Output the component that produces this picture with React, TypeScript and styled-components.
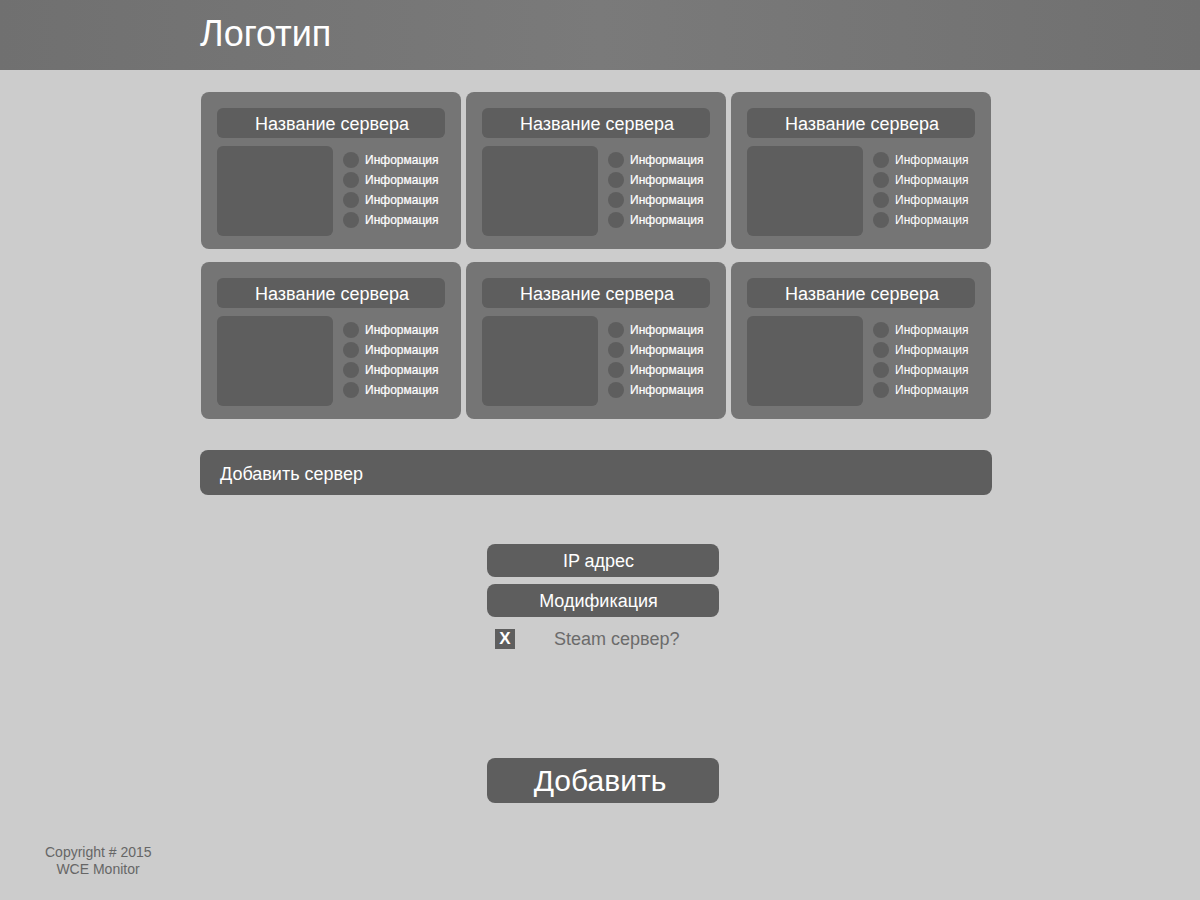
import { createGlobalStyle } from "styled-components";
import styled from "styled-components";

const GlobalStyle = createGlobalStyle`
  html, body {
    margin: 0;
    padding: 0;
    background: #cccccc;
    font-family: "Liberation Sans", Arial, sans-serif;
  }
`;

const servers = [1, 2, 3, 4, 5, 6];

const App = () => {
  return (
    <>
      <GlobalStyle />
      <Header>
        <HeaderInner>
          <Logo>Логотип</Logo>
        </HeaderInner>
      </Header>
      <Main>
        <Grid>
          {servers.map((id, i) => (
            <Card key={id}>
              <CardTitle>Название сервера</CardTitle>
              <CardBody>
                <Preview />
                <InfoList>
                  {[0, 1, 2, 3].map((n) => (
                    <InfoRow key={n} $strong={i % 3 !== 2}>
                      <Dot />
                      Информация
                    </InfoRow>
                  ))}
                </InfoList>
              </CardBody>
            </Card>
          ))}
        </Grid>

        <AddBar>Добавить сервер</AddBar>

        <Form>
          <Field>IP адрес</Field>
          <Field>Модификация</Field>
          <CheckRow>
            <CheckBox>X</CheckBox>
            <CheckLabel>Steam сервер?</CheckLabel>
          </CheckRow>
          <SubmitButton>Добавить</SubmitButton>
        </Form>
      </Main>
      <Footer>
        <div>Copyright # 2015</div>
        <div>WCE Monitor</div>
      </Footer>
    </>
  );
};

export default App;

const Header = styled.header`
  height: 70px;
  background: linear-gradient(90deg, #707070 0%, #7a7a7a 50%, #707070 100%);
`;

const HeaderInner = styled.div`
  width: 800px;
  margin: 0 auto;
  height: 100%;
  display: flex;
  align-items: center;
`;

const Logo = styled.div`
  color: #ffffff;
  font-size: 36px;
  line-height: 1;
  margin-top: -3px;
`;

const Main = styled.main`
  width: 792px;
  margin: 0 auto;
  padding: 22px 8px 0 0;
`;

const Grid = styled.div`
  display: grid;
  grid-template-columns: repeat(3, 260px);
  column-gap: 5px;
  row-gap: 13px;
  padding-left: 1px;
`;

const Card = styled.div`
  background: #757575;
  border-radius: 8px;
  padding: 16px 16px 13px;
  height: 157px;
  box-sizing: border-box;
`;

const CardTitle = styled.div`
  height: 30px;
  box-sizing: border-box;
  padding: 2px 0 0 2px;
  background: #5e5e5e;
  border-radius: 6px;
  color: #ffffff;
  font-size: 18px;
  display: flex;
  align-items: center;
  justify-content: center;
`;

const CardBody = styled.div`
  display: flex;
  margin-top: 8px;
  gap: 10px;
`;

const Preview = styled.div`
  width: 116px;
  height: 90px;
  background: #5e5e5e;
  border-radius: 6px;
`;

const InfoList = styled.div`
  display: flex;
  flex-direction: column;
  gap: 4px;
  padding-top: 6px;
`;

const InfoRow = styled.div<{ $strong: boolean }>`
  display: flex;
  align-items: center;
  gap: 6px;
  height: 16px;
  box-sizing: border-box;
  color: #ffffff;
  font-size: 12px;
  -webkit-text-stroke: ${(p) => (p.$strong ? "0.2px #ffffff" : "0")};
`;

const Dot = styled.span`
  width: 16px;
  height: 16px;
  border-radius: 50%;
  background: #5e5e5e;
  flex-shrink: 0;
`;

const AddBar = styled.div`
  margin-top: 31px;
  height: 45px;
  box-sizing: border-box;
  padding: 3px 0 0 20px;
  background: #5e5e5e;
  border-radius: 8px;
  color: #ffffff;
  font-size: 18px;
  display: flex;
  align-items: center;
`;

const Form = styled.div`
  width: 232px;
  margin-left: 287px;
  margin-top: 49px;
  display: flex;
  flex-direction: column;
  gap: 7px;
`;

const Field = styled.div`
  height: 33px;
  box-sizing: border-box;
  padding: 2px 9px 0 0;
  background: #5e5e5e;
  border-radius: 8px;
  color: #ffffff;
  font-size: 18px;
  display: flex;
  align-items: center;
  justify-content: center;
`;

const CheckRow = styled.div`
  display: flex;
  align-items: center;
  height: 20px;
  margin-top: 5px;
  padding-left: 8px;
`;

const CheckBox = styled.span`
  width: 20px;
  height: 20px;
  background: #5e5e5e;
  color: #ffffff;
  font-weight: bold;
  font-size: 17px;
  display: flex;
  align-items: center;
  justify-content: center;
`;

const CheckLabel = styled.span`
  margin-left: 39px;
  color: #6b6b6b;
  font-size: 18px;
`;

const SubmitButton = styled.div`
  margin-top: 102px;
  height: 45px;
  box-sizing: border-box;
  padding-right: 6px;
  background: #5e5e5e;
  border-radius: 8px;
  color: #ffffff;
  font-size: 30px;
  display: flex;
  align-items: center;
  justify-content: center;
`;

const Footer = styled.footer`
  width: 106px;
  margin: 41px 0 0 45px;
  color: #666666;
  font-size: 14px;
  line-height: 17px;
  text-align: center;
  white-space: nowrap;
`;
